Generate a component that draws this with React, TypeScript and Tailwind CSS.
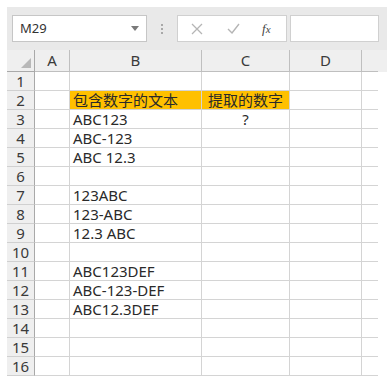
import React from "react";

const cols = ["A", "B", "C", "D", ""];
const colW = ["w-[35px]", "w-[132px]", "w-[88px]", "w-[72px]", "w-[16px]"];

type Cell = { text?: string; fill?: boolean; center?: boolean };
const rows: Record<number, Record<number, Cell>> = {
  2: { 1: { text: "包含数字的文本", fill: true }, 2: { text: "提取的数字", fill: true, center: true } },
  3: { 1: { text: "ABC123" }, 2: { text: "?", center: true } },
  4: { 1: { text: "ABC-123" } },
  5: { 1: { text: "ABC 12.3" } },
  7: { 1: { text: "123ABC" } },
  8: { 1: { text: "123-ABC" } },
  9: { 1: { text: "12.3 ABC" } },
  11: { 1: { text: "ABC123DEF" } },
  12: { 1: { text: "ABC-123-DEF" } },
  13: { 1: { text: "ABC12.3DEF" } },
};

export default function App() {
  const font = { fontFamily: '"Noto Sans", "Noto Sans CJK SC", sans-serif' };
  return (
    <div className="w-[387px] h-[387px] bg-white overflow-hidden" style={font}>
      <div className="h-[7px]" />
      {/* toolbar */}
      <div className="ml-[7px] h-[43px] bg-[#e9e9e9] flex items-start pt-[8px] pl-[5px]">
        <div className="w-[135px] h-[27px] bg-white border border-[#c6c6c6] flex items-center justify-between pl-[7px] pr-[7px]">
          <span className="text-[13px] text-[#333]">M29</span>
          <svg width="8" height="5" viewBox="0 0 8 5"><path d="M0 0h8L4 5z" fill="#7a7a7a" /></svg>
        </div>
        <div className="w-[30px] h-[27px] flex flex-col items-center justify-center gap-[2px]">
          <div className="w-[2px] h-[2px] bg-[#a8a8a8]" />
          <div className="w-[2px] h-[2px] bg-[#a8a8a8]" />
          <div className="w-[2px] h-[2px] bg-[#a8a8a8]" />
        </div>
        <div className="w-[110px] h-[27px] bg-white border border-[#d0d0d0] flex items-center">
          <svg className="ml-[13px]" width="12" height="12" viewBox="0 0 12 12"><path d="M1 1l10 10M11 1L1 11" stroke="#b5b5b5" strokeWidth="1.3" /></svg>
          <svg className="ml-[24px]" width="13" height="11" viewBox="0 0 13 11"><path d="M1 6l4 4 7-9" stroke="#b5b5b5" strokeWidth="1.4" fill="none" /></svg>
          <span className="ml-[22px] text-[13px] italic text-[#444]" style={{ fontFamily: '"Liberation Serif", serif' }}>f<span className="text-[11px]">x</span></span>
        </div>
        <div className="ml-[3px] w-[89px] h-[27px] bg-white border border-[#d0d0d0]" />
      </div>
      {/* grid */}
      <div className="ml-[7px] flex flex-col">
        <div className="flex h-[22px] bg-[#efefef]">
          <div className="w-[28px] h-full border-r border-b border-[#a9a9a9] relative">
            <svg className="absolute right-[3px] bottom-[3px]" width="10" height="10" viewBox="0 0 10 10"><path d="M10 0V10H0z" fill="#b8b8b8" /></svg>
          </div>
          {cols.map((c, i) => (
            <div key={i} className={`${colW[i]} h-full border-r border-b border-[#bfbfbf] flex items-center justify-center text-[15px] text-[#3a3a3a] ${i === 4 ? "border-r-0" : ""}`}>
              {c}
            </div>
          ))}
        </div>
        {Array.from({ length: 16 }, (_, r) => {
          const rn = r + 1;
          const data = rows[rn] || {};
          return (
            <div key={rn} className="flex h-[19px]">
              <div className="w-[28px] h-full bg-[#efefef] border-r border-r-[#a9a9a9] border-b border-b-[#d0d0d0] flex items-center justify-center text-[15px] text-[#3a3a3a] leading-none">
                {rn}
              </div>
              {cols.map((_, ci) => {
                const cell = data[ci];
                return (
                  <div
                    key={ci}
                    className={`${colW[ci]} h-full border-r border-b border-[#d4d4d4] flex items-center text-[15px] text-[#2a2a2a] leading-none whitespace-nowrap overflow-hidden ${cell?.fill ? "bg-[#ffc000]" : ""} ${cell?.center ? "justify-center" : "pl-[3px]"} ${ci === 4 ? "border-r-0" : ""}`}
                  >
                    {cell?.text}
                  </div>
                );
              })}
            </div>
          );
        })}
      </div>
    </div>
  );
}
